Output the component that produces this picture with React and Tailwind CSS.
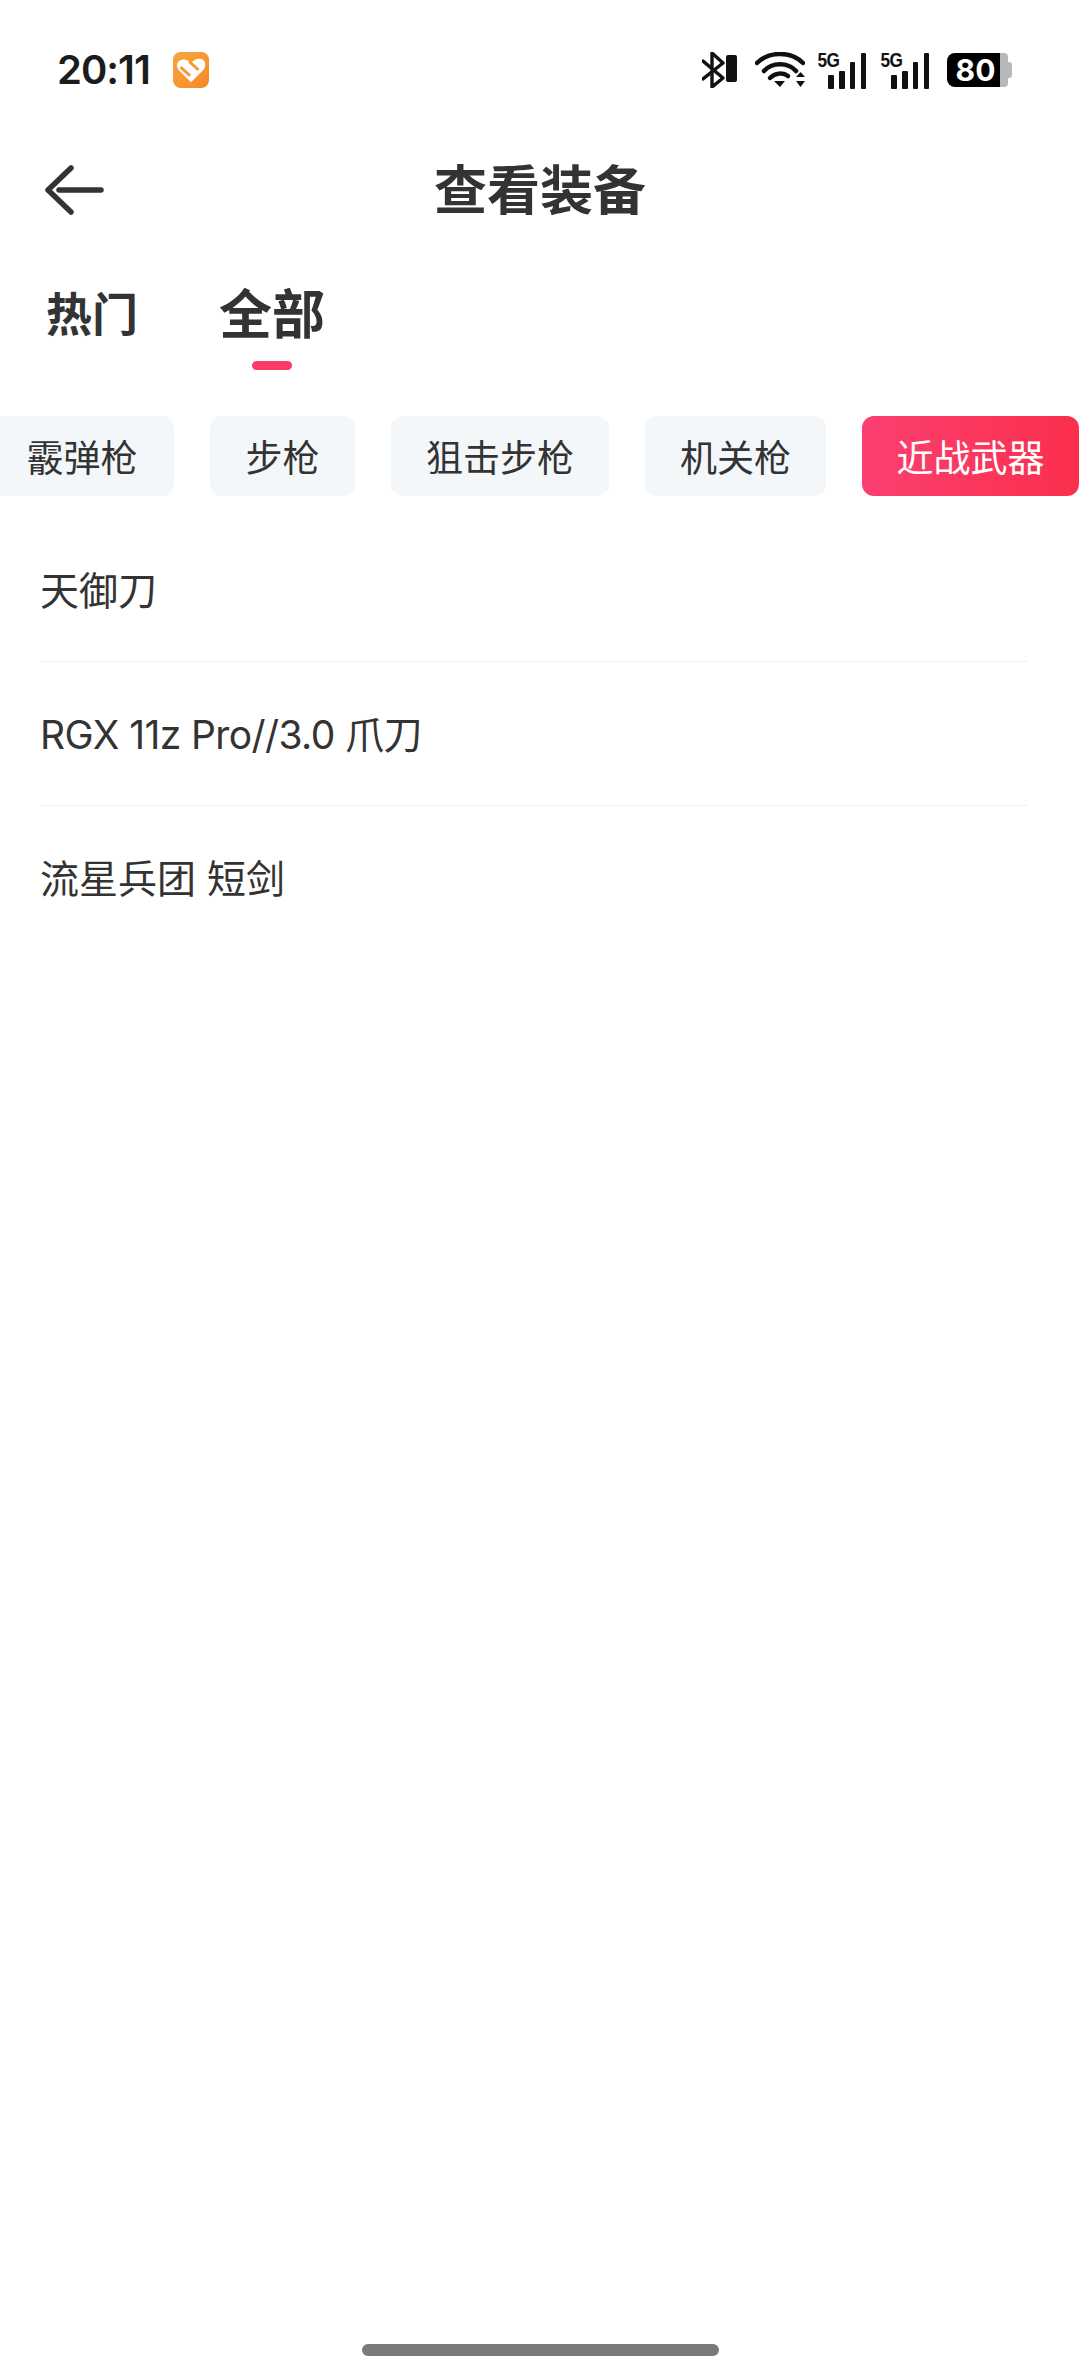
const sans = "font-['Inter','Noto_Sans_CJK_SC',sans-serif]";

function Signal({ className }) {
  return (
    <div className={`relative w-[48px] h-[37px] ${className}`}>
      <span className="absolute left-[-3px] top-[-3px] text-[21px] leading-[22px] font-bold text-[#111] font-['Liberation_Sans',sans-serif] scale-x-[0.82] tracking-[-0.5px]">5G</span>
      <svg className="absolute left-0 top-0" width="48" height="37" viewBox="0 0 48 37">
        <rect x="10" y="23" width="6" height="14" rx="1" fill="#111" />
        <rect x="21" y="19" width="6" height="18" rx="1" fill="#111" />
        <rect x="32" y="10" width="5" height="27" rx="1" fill="#111" />
        <rect x="43" y="1" width="5" height="36" rx="1" fill="#111" />
      </svg>
    </div>
  );
}

function StatusBar() {
  return (
    <div className="h-[142px] pl-[57px] pr-[68px] pt-[52px] flex justify-between items-start">
      <div className="flex items-center h-[36px]">
        <span className="text-[40px] leading-[36px] font-semibold text-[#1c1c1c] font-['Inter',sans-serif] tracking-[-1px]">20:11</span>
        <svg className="ml-[23px]" width="36" height="36" viewBox="0 0 38 38">
          <defs>
            <linearGradient id="ho" x1="0" y1="0" x2="1" y2="1">
              <stop offset="0" stopColor="#f9a63f" />
              <stop offset="1" stopColor="#f58a25" />
            </linearGradient>
          </defs>
          <rect width="38" height="38" rx="8" fill="url(#ho)" />
          <path d="M19 32 L6 19 C2 14 5 8 11 8 C15 8 17 10 19 12 C21 9 24 7 28 7 C34 7 36 14 32 19 Z" fill="#fff" />
          <path d="M8 16 L18 25 M17 10 L27 19" stroke="#f7982f" strokeWidth="3" />
        </svg>
      </div>
      <div className="flex items-start h-[36px]">
        <svg width="35" height="36" viewBox="0 0 35 36" fill="none">
          <path d="M1 9 L21 26 L10 35 L10 1 L21 11 L1 27" stroke="#111" strokeWidth="3.4" strokeLinejoin="round" strokeLinecap="round" />
          <rect x="24" y="3" width="11" height="27" rx="2" fill="#111" />
        </svg>
        <svg className="ml-[18px]" width="50" height="36" viewBox="0 0 50 36" fill="none">
          <path d="M2 11 C14 -1 36 -1 48 11" stroke="#111" strokeWidth="4.5" strokeLinecap="round" />
          <path d="M9 19 C17 10 33 10 41 19" stroke="#111" strokeWidth="4.5" strokeLinecap="round" />
          <path d="M15 26 C20 21 28 20 33 24" stroke="#111" strokeWidth="4.5" strokeLinecap="round" />
          <path d="M19 29 H30 L25 35 Z M41 25 L50 25 L45.5 20 Z M41 29 H50 L45.5 35 Z" fill="#111" />
        </svg>
        <Signal className="ml-[13px]" />
        <Signal className="ml-[15px]" />
        <div className="ml-[18px] flex items-center w-[65px] h-[34px] mt-[1px]">
          <div className="w-[53px] h-[34px] rounded-l-[8px] bg-black text-white text-[30px] leading-[34px] font-bold text-center font-['Inter',sans-serif] pl-[4px]">80</div>
          <div className="w-[8px] h-[34px] bg-[#b8b8b8] rounded-r-[4px]" />
          <div className="w-[4px] h-[16px] bg-[#b8b8b8] rounded-r-[3px]" />
        </div>
      </div>
    </div>
  );
}

const chips = [
  { label: "霰弹枪", w: "w-[184px]", ml: "ml-[-10px]" },
  { label: "步枪", w: "w-[145px]" },
  { label: "狙击步枪", w: "w-[218px]" },
  { label: "机关枪", w: "w-[181px]" },
];

const items = [
  { label: "天御刀" },
  { label: "RGX 11z Pro//3.0 爪刀", track: "tracking-[-0.6px]" },
  { label: "流星兵团 短剑" },
];

export default function App() {
  return (
    <div className={`w-[1080px] h-[2377px] bg-white overflow-hidden flex flex-col ${sans}`}>
      <StatusBar />

      {/* title bar */}
      <div className="relative h-[98px] flex items-center justify-center">
        <svg className="absolute left-[44px] top-[23px]" width="60" height="50" viewBox="0 0 60 50" fill="none">
          <path d="M27 3 L4 25 L27 47 M15 25 H57" stroke="#333" strokeWidth="5.5" strokeLinecap="round" strokeLinejoin="round" />
        </svg>
        <span className="text-[53px] leading-[60px] font-bold text-[#333]">查看装备</span>
      </div>

      {/* tabs */}
      <div className="h-[130px] flex items-start pl-[46px] pt-[47px]">
        <span className="text-[46px] leading-[54px] font-bold text-[#333] w-[173px]">热门</span>
        <div className="flex flex-col items-center mt-[-2px]">
          <span className="text-[53px] leading-[60px] font-bold text-[#333]">全部</span>
          <div className="w-[40px] h-[9px] rounded-full bg-[#fb3a67] mt-[16px]" />
        </div>
      </div>

      {/* chips */}
      <div className="flex gap-[36px] mt-[46px] h-[80px]">
        {chips.map((c) => (
          <div key={c.label} className={`${c.w} ${c.ml || ""} h-[80px] pt-[5px] shrink-0 rounded-[12px] bg-[#f4f7f9] flex items-center justify-center text-[37px] text-[#333]`}>
            {c.label}
          </div>
        ))}
        <div className="w-[217px] h-[80px] pt-[5px] shrink-0 rounded-[12px] bg-gradient-to-r from-[#fb3f70] to-[#fb2e4c] flex items-center justify-center text-[37px] text-white">
          近战武器
        </div>
      </div>

      {/* list */}
      <div className="ml-[40px] mt-[22px] w-[988px]">
        {items.map((t, i) => (
          <div key={t.label} className={`h-[144px] pt-[3px] flex items-center text-[39px] text-[#333] ${t.track || ""} ${i < items.length - 1 ? "border-b border-[#f0f0f0]" : ""}`}>
            {t.label}
          </div>
        ))}
      </div>

      <div className="mt-auto mb-[21px] mx-auto w-[357px] h-[12px] rounded-full bg-[#7a7a7a]" />
    </div>
  );
}
